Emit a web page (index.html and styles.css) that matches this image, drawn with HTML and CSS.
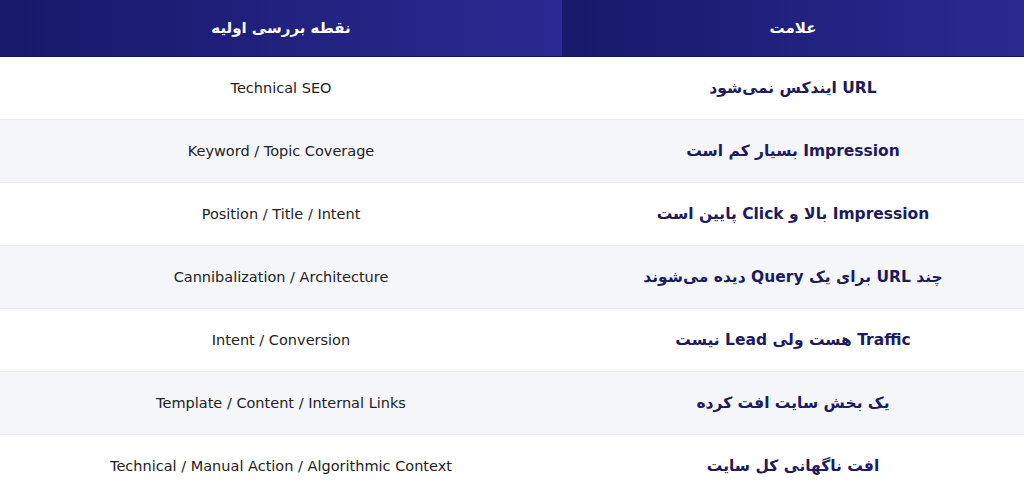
FILE: index.html
```html
<!DOCTYPE html>
<html lang="fa" dir="rtl">
<head>
<meta charset="utf-8">
<link rel="stylesheet" href="styles.css">
</head>
<body>
<table class="seo-table">
  <thead>
    <tr>
      <th class="col-sign">علامت</th>
      <th class="col-check">نقطه بررسی اولیه</th>
    </tr>
  </thead>
  <tbody>
    <tr><td class="sign">URL ایندکس نمی‌شود</td><td class="check">Technical SEO</td></tr>
    <tr><td class="sign">Impression بسیار کم است</td><td class="check">Keyword / Topic Coverage</td></tr>
    <tr><td class="sign">Impression بالا و Click پایین است</td><td class="check">Position / Title / Intent</td></tr>
    <tr><td class="sign">چند URL برای یک Query دیده می‌شوند</td><td class="check">Cannibalization / Architecture</td></tr>
    <tr><td class="sign">Traffic هست ولی Lead نیست</td><td class="check">Intent / Conversion</td></tr>
    <tr><td class="sign">یک بخش سایت افت کرده</td><td class="check">Template / Content / Internal Links</td></tr>
    <tr><td class="sign">افت ناگهانی کل سایت</td><td class="check">Technical / Manual Action / Algorithmic Context</td></tr>
  </tbody>
</table>
</body>
</html>
```

FILE: styles.css
```css
html, body {
  margin: 0;
  padding: 0;
  background: #ffffff;
}
body {
  font-family: "DejaVu Sans", sans-serif;
}
.seo-table {
  width: 100%;
  border-collapse: collapse;
  direction: rtl;
  table-layout: fixed;
}
.seo-table th {
  box-sizing: border-box;
  height: 56px;
  padding: 0 12px;
  color: #ffffff;
  font-size: 15px;
  font-weight: bold;
  text-align: center;
  background: linear-gradient(to right, #18186a, #2a2a92);
  border-bottom: 1px solid #16165a;
}
.col-sign {
  width: 462px;
}
.seo-table td {
  height: 62px;
  padding: 0 12px;
  text-align: center;
  border-bottom: 1px solid #e9eaee;
}
.seo-table tbody tr:nth-child(even) td {
  background: #f4f6fa;
}
.sign {
  color: #1b1b5e;
  font-weight: bold;
  font-size: 15.5px;
}
.check {
  color: #222222;
  font-size: 14.5px;
}
```
